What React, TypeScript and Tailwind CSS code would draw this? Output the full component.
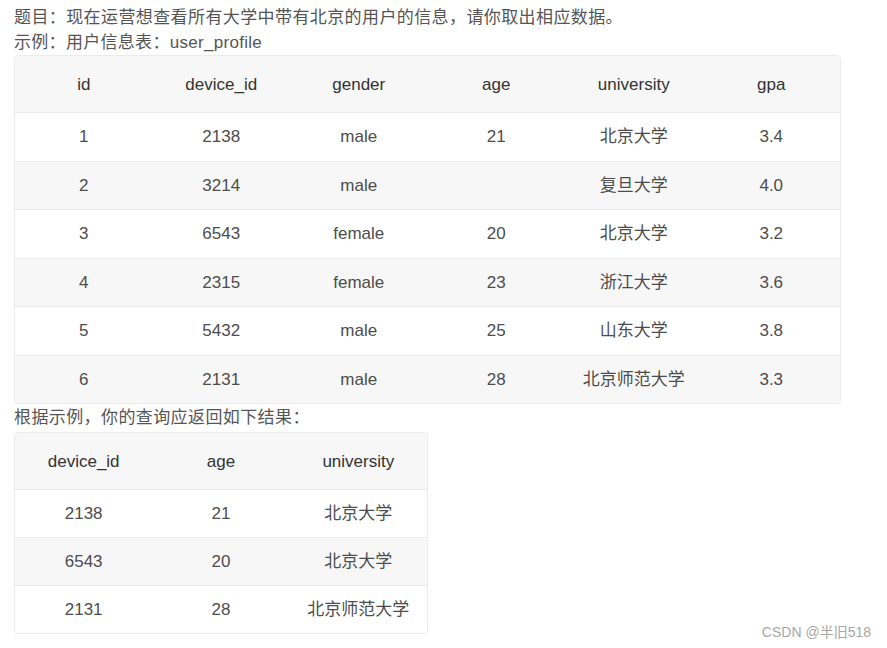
const font = { fontFamily: '"Liberation Sans", Arial, "Noto Sans CJK SC", sans-serif' };

const profileHead = ["id", "device_id", "gender", "age", "university", "gpa"];
const profileRows = [
  ["1", "2138", "male", "21", "北京大学", "3.4"],
  ["2", "3214", "male", "", "复旦大学", "4.0"],
  ["3", "6543", "female", "20", "北京大学", "3.2"],
  ["4", "2315", "female", "23", "浙江大学", "3.6"],
  ["5", "5432", "male", "25", "山东大学", "3.8"],
  ["6", "2131", "male", "28", "北京师范大学", "3.3"],
];

const resultHead = ["device_id", "age", "university"];
const resultRows = [
  ["2138", "21", "北京大学"],
  ["6543", "20", "北京大学"],
  ["2131", "28", "北京师范大学"],
];

function DataTable({ head, rows, cols, width, rowH }: { head: string[]; rows: string[][]; cols: string; width: string; rowH: string }) {
  return (
    <div className={`${width} overflow-hidden rounded-[4px] border border-[#ebebeb] bg-white`}>
      <div className={`grid ${cols} h-[56px] items-center bg-[#f7f7f7] text-[#333]`}>
        {head.map((h) => (
          <div key={h} className="text-center">
            {h}
          </div>
        ))}
      </div>
      {rows.map((row, i) => (
        <div
          key={i}
          className={`grid ${cols} ${rowH} items-center border-t border-[#ebebeb] text-[#4d4d4d] ${
            i % 2 === 1 ? "bg-[#f7f7f7]" : "bg-white"
          }`}
        >
          {row.map((cell, j) => (
            <div key={j} className="text-center">
              {cell}
            </div>
          ))}
        </div>
      ))}
    </div>
  );
}

export default function App() {
  return (
    <main className="relative h-[648px] w-[887px] bg-white pl-[14px] pt-[5px] text-[17px] leading-[25px] text-[#555]" style={font}>
      <p className="tracking-[0.4px]">题目：现在运营想查看所有大学中带有北京的用户的信息，请你取出相应数据。</p>
      <p className="tracking-[0.3px]">示例：用户信息表：user_profile</p>
      <DataTable head={profileHead} rows={profileRows} cols="grid-cols-6" width="w-[827px]" rowH="h-[48.5px]" />
      <p className="mt-[1px] tracking-[0.4px]">根据示例，你的查询应返回如下结果：</p>
      <div className="mt-[2px]">
        <DataTable head={resultHead} rows={resultRows} cols="grid-cols-3" width="w-[414px]" rowH="h-[48px]" />
      </div>
      <span className="absolute bottom-[6px] right-[16px] text-[14px] leading-[20px] text-[#a6a6a6]">CSDN @半旧518</span>
    </main>
  );
}
